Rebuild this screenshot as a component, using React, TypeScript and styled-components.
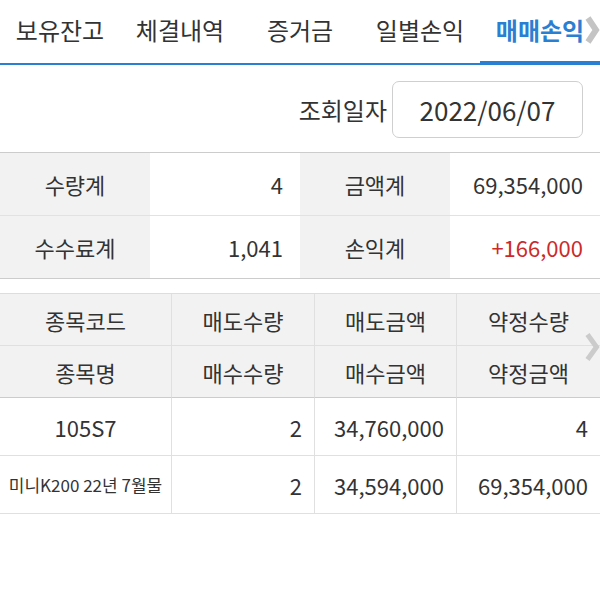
import React from 'react';
import styled, { createGlobalStyle } from 'styled-components';

const GlobalStyle = createGlobalStyle`
  body {
    margin: 0;
    background: #ffffff;
    font-family: "Noto Sans CJK KR", "Noto Sans", sans-serif;
    color: #333333;
  }
`;

const Page = styled.div`
  width: 600px;
  height: 600px;
  overflow: hidden;
  background: #fff;
`;

const TabBar = styled.div`
  position: relative;
  display: flex;
  height: 63px;
  border-bottom: 2px solid #2b7fd3;
`;

const Tab = styled.div<{ $active?: boolean }>`
  position: relative;
  flex: 0 0 120px;
  display: flex;
  align-items: center;
  justify-content: center;
  padding-bottom: 4px;
  font-size: 24px;
  font-weight: ${p => (p.$active ? 700 : 400)};
  color: ${p => (p.$active ? '#2b7fd3' : '#333')};

  &::after {
    content: "";
    display: ${p => (p.$active ? 'block' : 'none')};
    position: absolute;
    left: 0;
    right: 0;
    bottom: -2px;
    height: 4px;
    background: #2b7fd3;
  }
`;

const Chevron = styled.svg<{ $top: number }>`
  position: absolute;
  right: 0;
  top: ${p => p.$top}px;
`;

const DateRow = styled.div`
  display: flex;
  justify-content: flex-end;
  align-items: center;
  gap: 5px;
  padding: 16px 17px 14px 0;
`;

const DateLabel = styled.span`
  font-size: 24px;
`;

const DateBox = styled.div`
  width: 189px;
  height: 55px;
  display: flex;
  align-items: center;
  justify-content: center;
  border: 1px solid #cfcfcf;
  border-radius: 7px;
  font-size: 26px;
`;

const Summary = styled.div`
  display: grid;
  grid-template-columns: repeat(4, 150px);
  border-top: 1px solid #cccccc;
  border-bottom: 1px solid #cccccc;
`;

const SumCell = styled.div<{ $label?: boolean; $red?: boolean; $last?: boolean }>`
  height: 62px;
  display: flex;
  align-items: center;
  justify-content: ${p => (p.$label ? 'center' : 'flex-end')};
  padding-right: ${p => (p.$label ? 0 : 17)}px;
  background: ${p => (p.$label ? '#f2f2f2' : '#fff')};
  border-bottom: ${p => (p.$last ? 'none' : '1px solid #e2e2e2')};
  font-size: 22px;
  color: ${p => (p.$red ? '#cc2a2a' : '#333')};
`;

const Detail = styled.div`
  position: relative;
  margin-top: 14px;
  display: grid;
  grid-template-columns: 172px 143px 142px 143px;
  border-top: 1px solid #dddddd;
`;

const HeadCell = styled.div<{ $bottom?: boolean }>`
  height: 51px;
  display: flex;
  align-items: center;
  justify-content: center;
  background: #f2f2f2;
  border-right: 1px solid #e0e0e0;
  border-bottom: 1px solid ${p => (p.$bottom ? '#cccccc' : '#e0e0e0')};
  font-size: 22px;

  &:nth-child(4n) {
    border-right: none;
  }
`;

const DataCell = styled.div<{ $align?: 'center' | 'right'; $small?: boolean }>`
  height: 57px;
  display: flex;
  align-items: center;
  justify-content: ${p => (p.$align === 'center' ? 'center' : 'flex-end')};
  padding-right: ${p => (p.$align === 'center' ? 0 : 12)}px;
  border-right: 1px solid #e0e0e0;
  border-bottom: 1px solid #e0e0e0;
  font-size: ${p => (p.$small ? 17 : 22)}px;
  white-space: nowrap;

  &:nth-child(4n) {
    border-right: none;
  }
`;

const tabs = ['보유잔고', '체결내역', '증거금', '일별손익', '매매손익'];

const summary = [
  ['수량계', '4', '금액계', '69,354,000'],
  ['수수료계', '1,041', '손익계', '+166,000'],
];

const headers = [
  ['종목코드', '매도수량', '매도금액', '약정수량'],
  ['종목명', '매수수량', '매수금액', '약정금액'],
];

const GrayChevron: React.FC<{ top: number; w: number; h: number; color: string; stroke: number }> = ({ top, w, h, color, stroke }) => (
  <Chevron $top={top} width={w} height={h} viewBox={`0 0 ${w} ${h}`}>
    <polyline
      points={`${stroke / 2 + 1},${stroke / 2 + 1} ${w - stroke / 2 - 1},${h / 2} ${stroke / 2 + 1},${h - stroke / 2 - 1}`}
      fill="none"
      stroke={color}
      strokeWidth={stroke}
      strokeLinejoin="miter"
    />
  </Chevron>
);

export default function App() {
  return (
    <Page>
      <GlobalStyle />
      <TabBar>
        {tabs.map((t, i) => (
          <Tab key={t} $active={i === 4}>{t}</Tab>
        ))}
        <GrayChevron top={14} w={16} h={32} color="#c4c4c4" stroke={6} />
      </TabBar>

      <DateRow>
        <DateLabel>조회일자</DateLabel>
        <DateBox>2022/06/07</DateBox>
      </DateRow>

      <Summary>
        {summary.map((row, r) =>
          row.map((v, c) => (
            <SumCell
              key={`${r}-${c}`}
              $label={c % 2 === 0}
              $red={v.startsWith('+')}
              $last={r === summary.length - 1}
            >
              {v}
            </SumCell>
          ))
        )}
      </Summary>

      <Detail>
        {headers.map((row, r) =>
          row.map(h => (
            <HeadCell key={h} $bottom={r === 1}>{h}</HeadCell>
          ))
        )}
        <DataCell $align="center">105S7</DataCell>
        <DataCell>2</DataCell>
        <DataCell>34,760,000</DataCell>
        <DataCell>4</DataCell>
        <DataCell $align="center" $small>미니K200 22년 7월물</DataCell>
        <DataCell>2</DataCell>
        <DataCell>34,594,000</DataCell>
        <DataCell>69,354,000</DataCell>
        <GrayChevron top={37} w={16} h={32} color="#cbcbcb" stroke={5} />
      </Detail>
    </Page>
  );
}
